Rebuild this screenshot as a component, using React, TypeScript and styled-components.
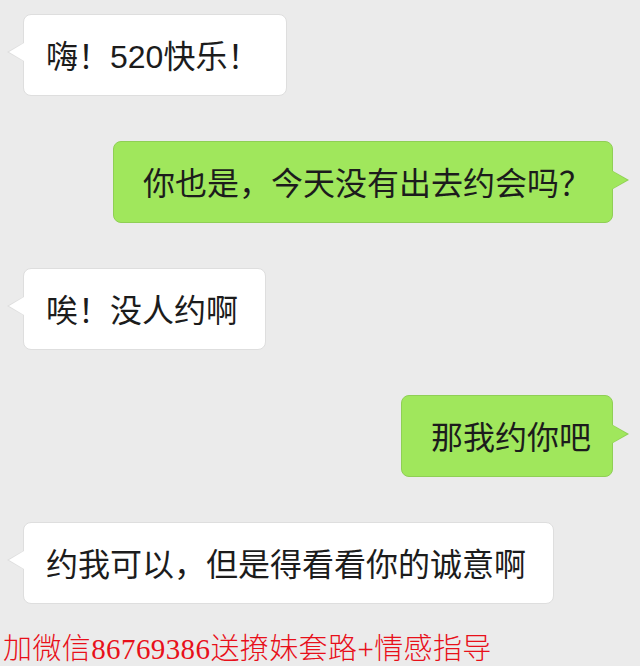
import React from "react";
import styled, { createGlobalStyle, css } from "styled-components";

const GlobalStyle = createGlobalStyle`
  html, body {
    margin: 0;
    padding: 0;
    background: #ebebeb;
  }
  body {
    font-family: "Liberation Sans", "Noto Sans CJK SC", sans-serif;
  }
`;

const Page = styled.div`
  width: 640px;
  height: 666px;
  overflow: hidden;
  background: #ebebeb;
  display: flex;
  flex-direction: column;
`;

const Chat = styled.div`
  display: flex;
  flex-direction: column;
  gap: 45px;
  padding: 14px 27px 0 23px;
`;

type Side = "left" | "right";

const Row = styled.div<{ $side: Side }>`
  display: flex;
  justify-content: ${(p) => (p.$side === "left" ? "flex-start" : "flex-end")};
`;

const Bubble = styled.div<{ $side: Side }>`
  position: relative;
  box-sizing: border-box;
  height: 82px;
  border-radius: 8px;
  padding: 22px ${(p) => (p.$side === "left" ? "27px" : "21px")} 20px
    ${(p) => (p.$side === "left" ? "22px" : "29px")};
  font-family: "Liberation Sans", "Noto Sans CJK SC", sans-serif;
  font-size: 32px;
  line-height: 40px;
  color: #1c1c1c;
  white-space: nowrap;
  ${(p) =>
    p.$side === "left"
      ? css`
          background: #ffffff;
          border: 1px solid #dedede;
        `
      : css`
          background: #a0e75c;
          border: 1px solid #8fcf55;
        `}

  &::before,
  &::after {
    content: "";
    position: absolute;
    width: 0;
    height: 0;
    border-top: 9px solid transparent;
    border-bottom: 9px solid transparent;
  }

  ${(p) =>
    p.$side === "left"
      ? css`
          &::before {
            left: -17px;
            top: 28px;
            border-right: 16px solid #dedede;
          }
          &::after {
            left: -15px;
            top: 28px;
            border-right: 15px solid #ffffff;
          }
        `
      : css`
          &::before {
            right: -17px;
            top: 29px;
            border-left: 16px solid #8fcf55;
          }
          &::after {
            right: -15px;
            top: 29px;
            border-left: 15px solid #a0e75c;
          }
        `}
`;

const Footer = styled.div`
  margin-top: 34px;
  padding-left: 3px;
  font-family: "Liberation Serif", "Noto Sans CJK SC", serif;
  font-weight: 300;
  font-size: 29px;
  line-height: 23px;
  letter-spacing: 0.4px;
  color: #e8101a;
  white-space: nowrap;
`;

const messages: { side: Side; text: string }[] = [
  { side: "left", text: "嗨！520快乐！" },
  { side: "right", text: "你也是，今天没有出去约会吗？" },
  { side: "left", text: "唉！没人约啊" },
  { side: "right", text: "那我约你吧" },
  { side: "left", text: "约我可以，但是得看看你的诚意啊" },
];

export default function App() {
  return (
    <>
      <GlobalStyle />
      <Page>
        <Chat>
          {messages.map((m, i) => (
            <Row key={i} $side={m.side}>
              <Bubble $side={m.side}>{m.text}</Bubble>
            </Row>
          ))}
        </Chat>
        <Footer>加微信86769386送撩妹套路+情感指导</Footer>
      </Page>
    </>
  );
}
